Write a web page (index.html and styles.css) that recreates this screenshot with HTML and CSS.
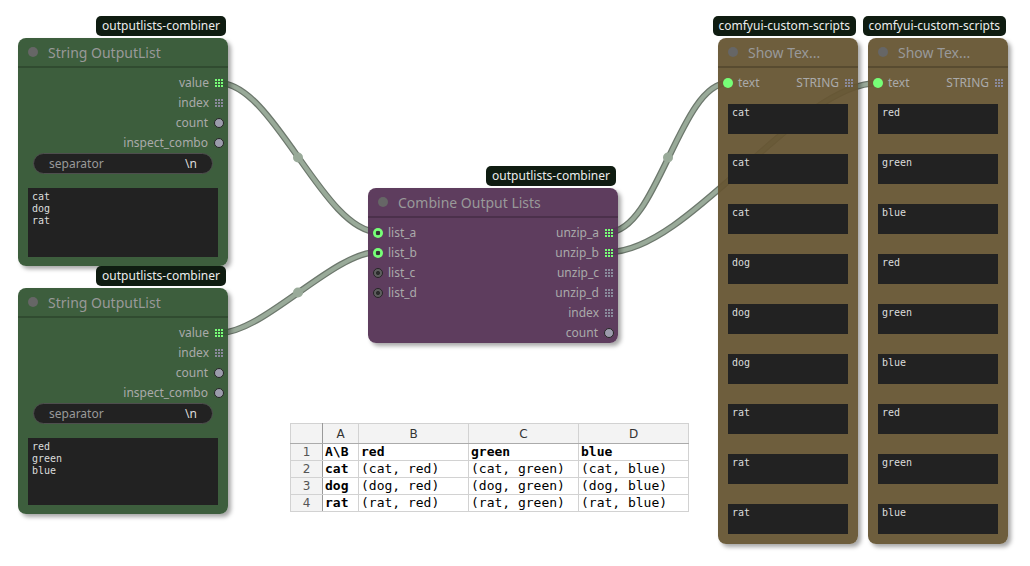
FILE: index.html
```html
<!DOCTYPE html>
<html lang="en">
<head>
    <meta charset="UTF-8">
    <title>Combine Output Lists</title>
    <link rel="stylesheet" href="styles.css">
</head>
<body>
<svg class="defs" width="0" height="0">
    <symbol id="grid" viewBox="0 0 8 8">
        <path d="M0 0h2v2H0zM3 0h2v2H3zM6 0h2v2H6zM0 3h2v2H0zM3 3h2v2H3zM6 3h2v2H6zM0 6h2v2H0zM3 6h2v2H3zM6 6h2v2H6z"/>
    </symbol>
</svg>

<div class="canvas">
    <!-- links sit under the nodes -->
    <svg class="links" width="1030" height="566">
        <g class="edge">
            <path d="M219,83 C273.6,83 323.4,232 378,232"/>
            <path d="M219,333 C263.8,333 333.2,252 378,252"/>
            <path d="M609,232 C656.8,232 680.2,83 728,83"/>
            <path d="M609,252 C688.6,252 798.4,83 878,83"/>
        </g>
        <g class="core">
            <path d="M219,83 C273.6,83 323.4,232 378,232"/>
            <path d="M219,333 C263.8,333 333.2,252 378,252"/>
            <path d="M609,232 C656.8,232 680.2,83 728,83"/>
            <path d="M609,252 C688.6,252 798.4,83 878,83"/>
        </g>
        <g class="mid">
            <circle cx="298" cy="157.5" r="5"/>
            <circle cx="298" cy="292.5" r="5"/>
            <circle cx="668" cy="157.5" r="5"/>
            <circle cx="743" cy="167.5" r="5"/>
        </g>
    </svg>

    <!-- String OutputList (cat / dog / rat) -->
    <div class="node green list-one">
        <div class="badge">outputlists-combiner</div>
        <div class="title"><span class="title-dot"></span>String OutputList</div>
        <div class="slots">
            <div class="row"><span></span><span class="out">value <svg class="grid on"><use href="#grid"/></svg></span></div>
            <div class="row"><span></span><span class="out">index <svg class="grid"><use href="#grid"/></svg></span></div>
            <div class="row"><span></span><span class="out">count <span class="circ"></span></span></div>
            <div class="row"><span></span><span class="out">inspect_combo <span class="circ"></span></span></div>
        </div>
        <div class="pill"><span>separator</span><span class="pill-val">\n</span></div>
        <div class="textbox tall">cat
dog
rat</div>
    </div>

    <!-- String OutputList (red / green / blue) -->
    <div class="node green list-two">
        <div class="badge">outputlists-combiner</div>
        <div class="title"><span class="title-dot"></span>String OutputList</div>
        <div class="slots">
            <div class="row"><span></span><span class="out">value <svg class="grid on"><use href="#grid"/></svg></span></div>
            <div class="row"><span></span><span class="out">index <svg class="grid"><use href="#grid"/></svg></span></div>
            <div class="row"><span></span><span class="out">count <span class="circ"></span></span></div>
            <div class="row"><span></span><span class="out">inspect_combo <span class="circ"></span></span></div>
        </div>
        <div class="pill"><span>separator</span><span class="pill-val">\n</span></div>
        <div class="textbox tall">red
green
blue</div>
    </div>

    <!-- Combine Output Lists -->
    <div class="node purple combine">
        <div class="badge">outputlists-combiner</div>
        <div class="title"><span class="title-dot"></span>Combine Output Lists</div>
        <div class="slots">
            <div class="row"><span class="in"><span class="ring on"></span>list_a</span><span class="out">unzip_a <svg class="grid on"><use href="#grid"/></svg></span></div>
            <div class="row"><span class="in"><span class="ring on"></span>list_b</span><span class="out">unzip_b <svg class="grid on"><use href="#grid"/></svg></span></div>
            <div class="row"><span class="in"><span class="ring"></span>list_c</span><span class="out">unzip_c <svg class="grid"><use href="#grid"/></svg></span></div>
            <div class="row"><span class="in"><span class="ring"></span>list_d</span><span class="out">unzip_d <svg class="grid"><use href="#grid"/></svg></span></div>
            <div class="row"><span></span><span class="out">index <svg class="grid"><use href="#grid"/></svg></span></div>
            <div class="row"><span></span><span class="out">count <span class="circ"></span></span></div>
        </div>
    </div>

    <!-- Show Text nodes -->
    <div class="node brown show-a">
        <div class="badge">comfyui-custom-scripts</div>
        <div class="title"><span class="title-dot"></span>Show Tex...</div>
        <div class="slots">
            <div class="row"><span class="in"><span class="dot-in"></span>text</span><span class="out">STRING <svg class="grid"><use href="#grid"/></svg></span></div>
        </div>
        <div class="boxes">
            <div class="textbox">cat</div>
            <div class="textbox">cat</div>
            <div class="textbox">cat</div>
            <div class="textbox">dog</div>
            <div class="textbox">dog</div>
            <div class="textbox">dog</div>
            <div class="textbox">rat</div>
            <div class="textbox">rat</div>
            <div class="textbox">rat</div>
        </div>
    </div>

    <div class="node brown show-b">
        <div class="badge">comfyui-custom-scripts</div>
        <div class="title"><span class="title-dot"></span>Show Tex...</div>
        <div class="slots">
            <div class="row"><span class="in"><span class="dot-in"></span>text</span><span class="out">STRING <svg class="grid"><use href="#grid"/></svg></span></div>
        </div>
        <div class="boxes">
            <div class="textbox">red</div>
            <div class="textbox">green</div>
            <div class="textbox">blue</div>
            <div class="textbox">red</div>
            <div class="textbox">green</div>
            <div class="textbox">blue</div>
            <div class="textbox">red</div>
            <div class="textbox">green</div>
            <div class="textbox">blue</div>
        </div>
    </div>

    <!-- result sheet -->
    <table class="sheet">
        <colgroup>
            <col style="width: 32px">
            <col style="width: 36px">
            <col style="width: 110px">
            <col style="width: 110px">
            <col style="width: 110px">
        </colgroup>
        <tr><th class="corner"></th><th>A</th><th>B</th><th>C</th><th>D</th></tr>
        <tr><td class="rn">1</td><td class="b">A\B</td><td class="b">red</td><td class="b">green</td><td class="b">blue</td></tr>
        <tr><td class="rn">2</td><td class="b">cat</td><td>(cat, red)</td><td>(cat, green)</td><td>(cat, blue)</td></tr>
        <tr><td class="rn">3</td><td class="b">dog</td><td>(dog, red)</td><td>(dog, green)</td><td>(dog, blue)</td></tr>
        <tr><td class="rn">4</td><td class="b">rat</td><td>(rat, red)</td><td>(rat, green)</td><td>(rat, blue)</td></tr>
    </table>
</div>
</body>
</html>
```

FILE: styles.css
```css
body, html {
    margin: 0;
    padding: 0;
    background: #fff;
}

.defs {
    position: absolute;
}

.canvas {
    position: relative;
    width: 1030px;
    height: 566px;
    overflow: hidden;
    font-family: "Noto Sans", sans-serif;
}

/* links */
.links {
    position: absolute;
    left: 0;
    top: 0;
}

.links path {
    fill: none;
}

.edge path {
    stroke: #6d786d;
    stroke-width: 6.5;
}

.core path {
    stroke: #99aa99;
    stroke-width: 4;
}

.mid circle {
    fill: #99aa99;
}

/* nodes */
.node {
    position: absolute;
    display: flex;
    flex-direction: column;
    border-radius: 8px;
    box-shadow: 3px 3px 4px rgba(0, 0, 0, 0.35);
}

.green  { background: rgba(51, 85, 51, 0.95); }
.purple { background: rgba(85, 51, 85, 0.95); }
.brown  { background: rgba(102, 85, 51, 0.95); }

.list-one { left: 18px; top: 38px; width: 210px; height: 228px; }
.list-two { left: 18px; top: 288px; width: 210px; height: 226px; }
.combine  { left: 368px; top: 188px; width: 250px; }
.show-a   { left: 718px; top: 38px; width: 140px; height: 506px; }
.show-b   { left: 868px; top: 38px; width: 140px; height: 506px; }

.badge {
    position: absolute;
    right: 2px;
    bottom: 100%;
    margin-bottom: 2px;
    height: 20px;
    line-height: 20px;
    padding: 0 6px;
    border-radius: 5px;
    background: #0f1c11;
    color: #ececec;
    font-size: 12px;
    white-space: nowrap;
}

.title {
    height: 28px;
    display: flex;
    align-items: center;
    gap: 10px;
    padding-left: 10px;
    border-bottom: 2px solid rgba(0, 0, 0, 0.2);
    color: #999;
    font-size: 14px;
    white-space: nowrap;
}

.title-dot {
    width: 10px;
    height: 10px;
    border-radius: 50%;
    background: #666;
}

.slots {
    padding-top: 5px;
}

.row {
    height: 20px;
    display: flex;
    align-items: center;
    justify-content: space-between;
    padding: 0 5px;
    color: #aaa;
    font-size: 12px;
    line-height: 18px;
}

.in, .out {
    display: flex;
    align-items: center;
    white-space: nowrap;
}

.in {
    gap: 5px;
}

.out {
    gap: 6px;
}

.grid {
    width: 8px;
    height: 8px;
    fill: #8a8a9c;
}

.grid.on {
    fill: #77ff77;
}

.circ {
    width: 10px;
    height: 10px;
    margin-right: -1px;
    box-sizing: border-box;
    border-radius: 50%;
    background: #9c9cac;
    border: 1.5px solid #262626;
}

.ring {
    width: 10px;
    height: 10px;
    box-sizing: border-box;
    border-radius: 50%;
    border: 1px solid #262626;
    background: radial-gradient(circle, #2c2c2c 0 1.6px, #5e5e5e 2.4px);
}

.ring.on {
    border: none;
    background: radial-gradient(circle, #333 0 2px, #77ff77 2.6px);
}

.dot-in {
    width: 10px;
    height: 10px;
    border-radius: 50%;
    background: #77ff77;
}

/* widgets */
.pill {
    height: 21px;
    box-sizing: border-box;
    margin: 0 15px;
    padding: 0 15px;
    display: flex;
    align-items: center;
    justify-content: space-between;
    border-radius: 11px;
    border: 1px solid #4e4e4e;
    background: #222;
    color: #999;
    font-size: 12px;
}

.pill-val {
    color: #ddd;
}

.textbox {
    background: #222;
    color: #ddd;
    font-family: "DejaVu Sans Mono", monospace;
    font-size: 10px;
    line-height: 12px;
    padding: 3px 4px 2px;
    white-space: pre;
    height: 30px;
    box-sizing: border-box;
}

.textbox.tall {
    flex: 1;
    height: auto;
    margin: 14px 10px 9px;
}

.boxes {
    display: flex;
    flex-direction: column;
    gap: 20px;
    margin-top: 11px;
    padding: 0 10px;
}

/* sheet */
.sheet {
    position: absolute;
    left: 290px;
    top: 423px;
    width: 399px;
    table-layout: fixed;
    border-collapse: collapse;
    font-family: "DejaVu Sans Mono", monospace;
    font-size: 13px;
    color: #000;
}

.sheet th, .sheet td {
    border: 1px solid #d2d2d2;
    padding: 0 2px;
    height: 16px;
    line-height: 16px;
    white-space: nowrap;
    overflow: hidden;
}

.sheet th {
    height: 19px;
    background: #f3f3f3;
    border-bottom-color: #ababab;
    font-family: "DejaVu Sans", sans-serif;
    font-size: 12px;
    font-weight: normal;
    color: #333;
    text-align: center;
}

.sheet .rn, .sheet .corner {
    background: #f3f3f3;
    border-right-color: #9a9a9a;
    font-family: "DejaVu Sans", sans-serif;
    font-size: 12px;
    color: #555;
    text-align: center;
}

.sheet .b {
    font-weight: bold;
}
```
